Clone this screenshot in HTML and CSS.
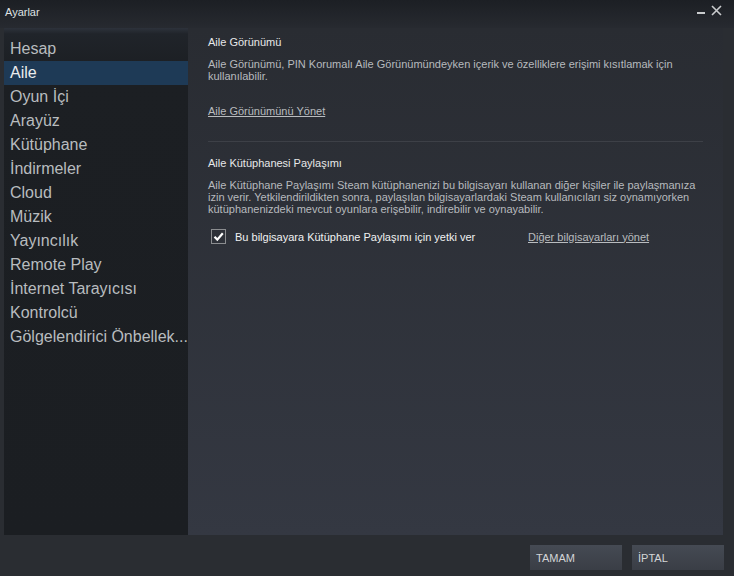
FILE: index.html
```html
<!DOCTYPE html>
<html lang="tr">
<head>
<meta charset="utf-8">
<title>Ayarlar</title>
<link rel="stylesheet" href="styles.css">
</head>
<body>
<div class="window">
  <div class="titlebar">
    <span class="title">Ayarlar</span>
    <div class="controls">
      <svg class="ctl" width="10" height="10" viewBox="0 0 10 10"><rect x="1" y="7" width="8" height="2" fill="#c9cbcd"/></svg>
      <svg class="ctl" width="11" height="11" viewBox="0 0 11 11"><path d="M1 1L10 10M10 1L1 10" stroke="#c9cbcd" stroke-width="1.6"/></svg>
    </div>
  </div>
  <div class="main">
    <nav class="sidebar">
      <div class="nav-item">Hesap</div>
      <div class="nav-item active">Aile</div>
      <div class="nav-item">Oyun İçi</div>
      <div class="nav-item">Arayüz</div>
      <div class="nav-item">Kütüphane</div>
      <div class="nav-item">İndirmeler</div>
      <div class="nav-item">Cloud</div>
      <div class="nav-item">Müzik</div>
      <div class="nav-item">Yayıncılık</div>
      <div class="nav-item">Remote Play</div>
      <div class="nav-item">İnternet Tarayıcısı</div>
      <div class="nav-item">Kontrolcü</div>
      <div class="nav-item">Gölgelendirici Önbellek...</div>
    </nav>
    <section class="content">
      <h2 class="heading">Aile Görünümü</h2>
      <p class="desc">Aile Görünümü, PIN Korumalı Aile Görünümündeyken içerik ve özelliklere erişimi kısıtlamak için kullanılabilir.</p>
      <a class="link manage">Aile Görünümünü Yönet</a>
      <hr class="divider">
      <h2 class="heading">Aile Kütüphanesi Paylaşımı</h2>
      <p class="desc">Aile Kütüphane Paylaşımı Steam kütüphanenizi bu bilgisayarı kullanan diğer kişiler ile paylaşmanıza izin verir. Yetkilendirildikten sonra, paylaşılan bilgisayarlardaki Steam kullanıcıları siz oynamıyorken kütüphanenizdeki mevcut oyunlara erişebilir, indirebilir ve oynayabilir.</p>
      <div class="check-row">
        <span class="checkbox">
          <svg width="13" height="13" viewBox="0 0 13 13"><path d="M2.5 6.8L5.3 9.6L10.8 3.2" fill="none" stroke="#ffffff" stroke-width="2.2"/></svg>
        </span>
        <span class="check-label">Bu bilgisayara Kütüphane Paylaşımı için yetki ver</span>
        <a class="link other">Diğer bilgisayarları yönet</a>
      </div>
    </section>
  </div>
  <div class="footer">
    <button class="btn">TAMAM</button>
    <button class="btn">İPTAL</button>
  </div>
</div>
</body>
</html>
```

FILE: styles.css
```css
html, body {
  margin: 0;
  padding: 0;
  background: #2a2d32;
}
.window {
  width: 734px;
  height: 576px;
  display: flex;
  flex-direction: column;
  font-family: "Liberation Sans", Arial, sans-serif;
  background: #2a2d32;
  overflow: hidden;
}
.titlebar {
  height: 28px;
  flex: none;
  display: flex;
  align-items: flex-start;
  justify-content: space-between;
  background: linear-gradient(#1c1f24, #272a30);
}
.title {
  font-size: 11px;
  color: #dfe1e3;
  margin: 6px 0 0 5px;
}
.controls {
  display: flex;
  align-items: flex-start;
  gap: 5px;
  margin: 5px 12px 0 0;
}
.main {
  height: 507px;
  flex: none;
  display: flex;
  margin: 0 11px 0 4px;
}
.sidebar {
  width: 184px;
  flex: none;
  padding-top: 9px;
  box-sizing: border-box;
  background: linear-gradient(#2d323b 0, #20242a 6px, #1c1f23 40px, #1b1e22 100%);
}
.nav-item {
  height: 24px;
  line-height: 24px;
  font-size: 16px;
  color: #b8bcbf;
  padding-left: 6px;
  white-space: nowrap;
}
.nav-item.active {
  background: #1e3a56;
  color: #ebedee;
}
.content {
  flex: 1;
  padding: 8px 20px 0 20px;
  background: linear-gradient(#292c32, #343842);
}
.heading {
  margin: 0;
  font-size: 11px;
  font-weight: normal;
  line-height: 13px;
  color: #e7e8e9;
}
.desc {
  margin: 9px 0 0 0;
  font-size: 11px;
  line-height: 12px;
  color: #b7babe;
  max-width: 495px;
}
.link {
  font-size: 11px;
  color: #b9bcbf;
  text-decoration: underline;
}
.manage {
  display: block;
  margin-top: 23px;
}
.divider {
  border: none;
  border-top: 1px solid #3d4047;
  margin: 24px 0 15px 0;
}
.check-row {
  display: flex;
  align-items: center;
  margin-top: 14px;
  padding-left: 3px;
}
.checkbox {
  width: 13px;
  height: 13px;
  border: 1px solid #8b8d90;
  display: flex;
  align-items: center;
  justify-content: center;
}
.check-label {
  font-size: 11px;
  color: #f0f1f2;
  margin-left: 9px;
  width: 293px;
}
.footer {
  flex: 1;
  display: flex;
  justify-content: flex-end;
  align-items: flex-start;
  gap: 10px;
  padding: 10px 10px 0 0;
  background: #2a2d32;
}
.btn {
  width: 92px;
  height: 25px;
  border: none;
  padding: 0 0 0 6px;
  text-align: left;
  font-family: "Liberation Sans", Arial, sans-serif;
  font-size: 11px;
  color: #d3d5d7;
  background: linear-gradient(#454a53, #3a3e46);
}
```
